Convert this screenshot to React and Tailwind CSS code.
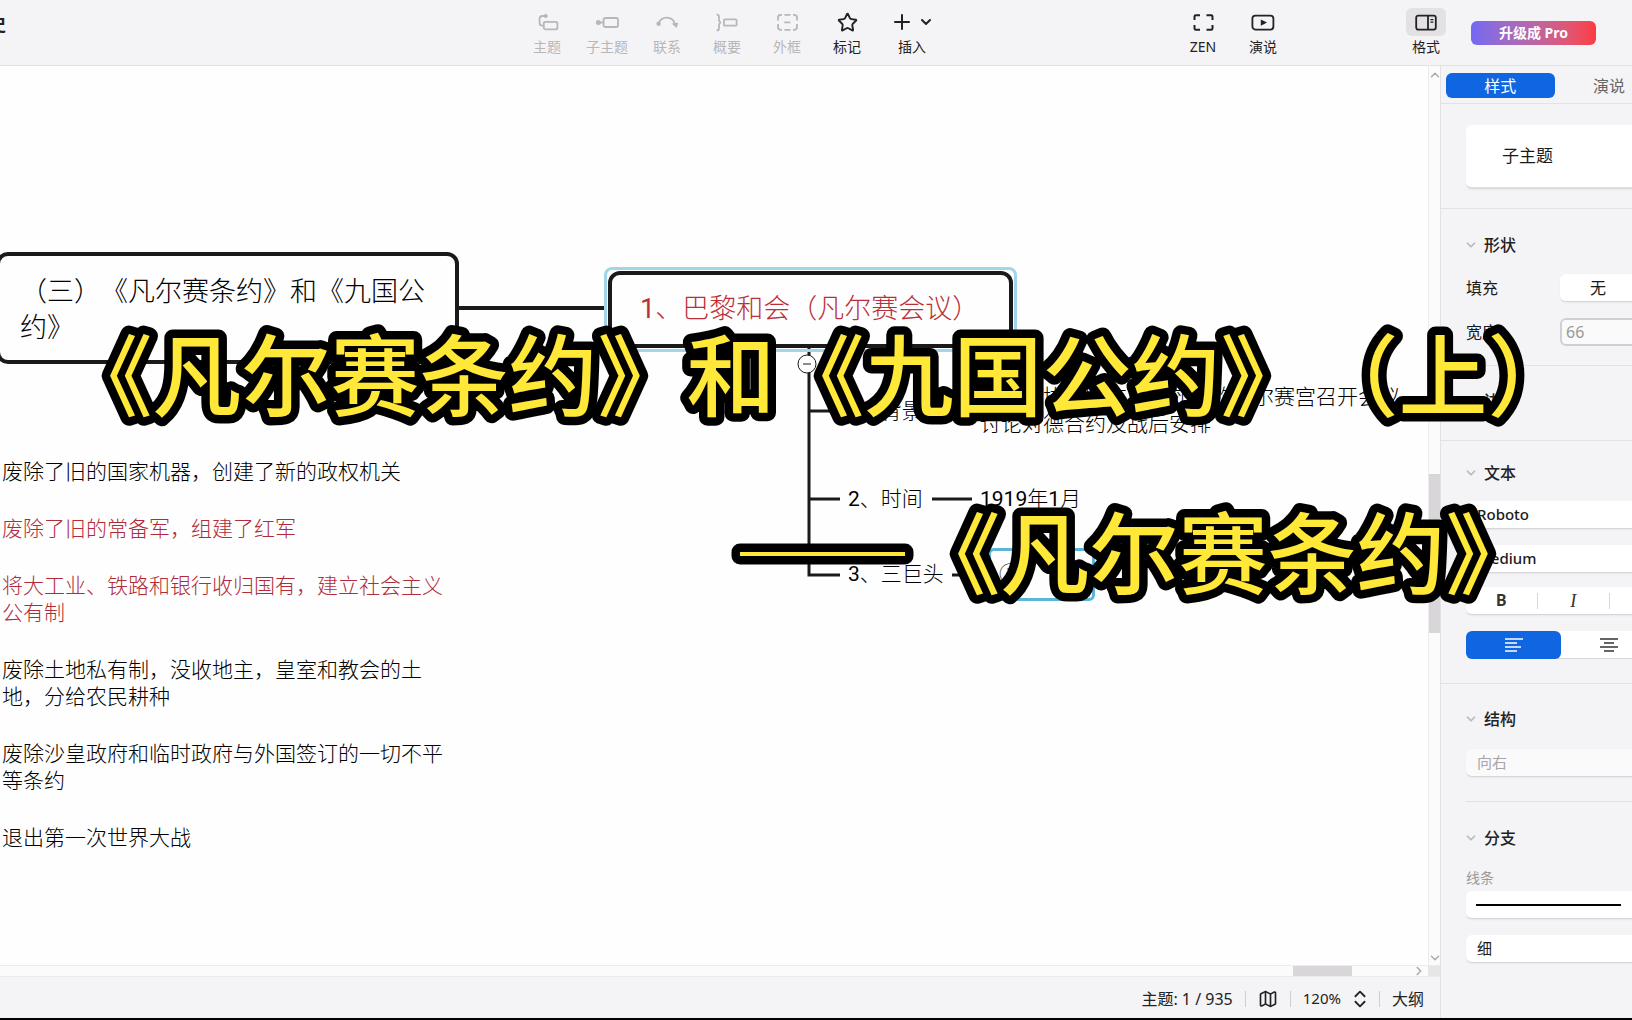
import { useState } from 'react'

import { ChevronDown, ChevronRight, ChevronUp, ChevronsUpDown, Map, Plus, Star } from 'lucide-react'

const iconProps = {
  width: 24,
  height: 20,
  viewBox: '0 0 24 20',
  fill: 'none',
  stroke: 'currentColor',
  strokeWidth: 1.8,
  strokeLinejoin: 'round',
  'aria-hidden': true,
}

const TopicIcon = () => (
  <svg {...iconProps}>
    <circle cx="10.7" cy="4" r="2" fill="currentColor" stroke="none" />
    <path d="M10.5 4H7.2Q4.6 4 4.6 6.6V11Q4.6 13.6 7.2 13.6H8.5" />
    <rect x="8.8" y="9.8" width="13.6" height="7.6" rx="1.6" />
  </svg>
)

const SubtopicIcon = () => (
  <svg {...iconProps}>
    <circle cx="3.4" cy="10.5" r="2.5" fill="currentColor" stroke="none" />
    <path d="M4 10.5H8.5" />
    <rect x="8.6" y="6" width="14.4" height="9" rx="1.8" />
  </svg>
)

const RelationIcon = () => (
  <svg {...iconProps}>
    <circle cx="3.6" cy="11.8" r="2.2" fill="currentColor" stroke="none" />
    <path d="M3.6 11.8C6 3.5 17.5 3.5 20 12" />
    <path d="M16.6 11.6L23.4 10.8L21.6 16Z" fill="currentColor" stroke="none" />
  </svg>
)

const SummaryIcon = () => (
  <svg {...iconProps}>
    <path d="M1.6 2.6Q4 2.6 4 4.6V8.8L5.4 10.5L4 12.2V16.4Q4 18.4 1.6 18.4" />
    <rect x="9" y="7.3" width="12.6" height="6.4" rx="1" />
  </svg>
)

const BoundaryIcon = () => (
  <svg {...iconProps}>
    <path d="M3 8.6V5.6Q3 2.8 5.8 2.8H7M9.5 2.8H15.5M18 2.8H19.2Q22 2.8 22 5.6V8.6M22 12V15Q22 17.8 19.2 17.8H18M15.5 17.8H9.5M7 17.8H5.8Q3 17.8 3 15V12M9.3 10.3H15.3" />
  </svg>
)

const ZenIcon = () => (
  <svg {...iconProps} strokeWidth={2}>
    <path d="M3.5 8V4.6Q3.5 3.2 4.9 3.2H9M15.5 3.2H20.1Q21.5 3.2 21.5 4.6V8M21.5 13V16.4Q21.5 17.8 20.1 17.8H15.5M9 17.8H4.9Q3.5 17.8 3.5 16.4V13" />
  </svg>
)

const PlayIcon = () => (
  <svg {...iconProps}>
    <rect x="1.4" y="3.6" width="21" height="14" rx="3" />
    <path d="M9.8 7.4L16 10.6L9.8 13.8Z" fill="currentColor" stroke="none" />
  </svg>
)

const FormatIcon = () => (
  <svg {...iconProps}>
    <rect x="2.2" y="3.6" width="19.6" height="14" rx="2" />
    <path d="M14 3.6V17.6" />
    <path d="M16.4 7.6H19.4M16.4 10.2H19.4" strokeWidth="1.3" />
  </svg>
)

const tools = [
  { label: '主题', icon: <TopicIcon />, disabled: true },
  { label: '子主题', icon: <SubtopicIcon />, disabled: true },
  { label: '联系', icon: <RelationIcon />, disabled: true },
  { label: '概要', icon: <SummaryIcon />, disabled: true },
  { label: '外框', icon: <BoundaryIcon />, disabled: true },
  { label: '标记', icon: <Star size={21} strokeWidth={2.2} /> },
]

function ToolButton({ label, icon, disabled, active }) {
  return (
    <button type="button" disabled={disabled} className="flex w-[60px] flex-col items-center text-[#222] disabled:text-[#b7b7ba]">
      <span className={active ? 'flex h-7 w-10 items-center justify-center rounded-md bg-[#e3e1e4]' : 'flex h-7 items-center justify-center'}>
        {icon}
      </span>
      <span className="mt-px text-sm leading-5">{label}</span>
    </button>
  )
}

function Header() {
  return (
    <header className="flex h-[66px] shrink-0 items-start border-b border-[#e2e2e5] bg-[#f4f4f7] pt-2">
      <h1 className="-ml-3 grow-[529] basis-0 text-lg leading-8 font-bold text-[#222]">史</h1>
      <div className="flex">
        {tools.map(tool => <ToolButton key={tool.label} {...tool} />)}
        <button type="button" className="flex w-[70px] flex-col items-center text-[#222]">
          <span className="flex h-7 items-center gap-1">
            <Plus size={24} strokeWidth={2} />
            <ChevronDown size={16} strokeWidth={3} />
          </span>
          <span className="mt-px text-sm leading-5">插入</span>
        </button>
      </div>
      <div className="grow-[226] basis-0" />
      <ToolButton label="ZEN" icon={<ZenIcon />} />
      <ToolButton label="演说" icon={<PlayIcon />} />
      <div className="grow-[103] basis-0" />
      <ToolButton label="格式" icon={<FormatIcon />} active />
      <button type="button" className="mt-[13px] mr-9 ml-[15px] h-6 w-[125px] rounded-md bg-linear-to-r from-[#7468f4] to-[#fc3a40] text-sm leading-6 font-bold text-white">
        升级成 Pro
      </button>
    </header>
  )
}

const outline = [
  { text: '废除了旧的国家机器，创建了新的政权机关' },
  { text: '废除了旧的常备军，组建了红军', red: true },
  { text: '将大工业、铁路和银行收归国有，建立社会主义公有制', red: true },
  { text: '废除土地私有制，没收地主，皇室和教会的土地，分给农民耕种' },
  { text: '废除沙皇政府和临时政府与外国签订的一切不平等条约' },
  { text: '退出第一次世界大战' },
]

// Free canvas, every node sits at its own place on the map
function MindMap() {
  return (
    <div className="relative min-w-0 flex-1 overflow-hidden bg-[#fefefe] font-['Roboto','Noto_Sans_CJK_SC',sans-serif] text-[21px] leading-[27px] font-light text-black">
      <svg className="absolute top-0 left-0" width="1200" height="600" fill="none" stroke="#1a1a1a" strokeWidth="3" aria-hidden="true">
        <path d="M459 242H607" strokeWidth="4" />
        <path d="M809 281V509H840M809 345H840M809 433H840M932 345H972M932 433H972M952 509H992" />
        <circle cx="807" cy="298" r="9" fill="#fefefe" strokeWidth="1" />
        <path d="M803 298H811" strokeWidth="1" />
      </svg>

      <div className="absolute top-[186px] left-[-4px] w-[463px] rounded-xl border-4 border-[#1a1a1a] px-5 py-4 font-['Noto_Sans_CJK_SC',sans-serif] text-[27px] leading-9">
        （三）《凡尔赛条约》和《九国公约》
      </div>

      <div className="absolute top-[201px] left-[604px] rounded-lg border-3 border-[#a3d5ea] p-px">
        <div className="flex h-[77px] w-[405px] items-center rounded-xl border-4 border-[#1a1a1a] px-7 text-[27px] whitespace-nowrap text-[#bb3038]">
          <span className="font-normal">1</span>、巴黎和会（凡尔赛会议）
        </div>
      </div>

      <p className="absolute top-[332px] left-[848px]"><span className="font-normal">1</span>、背景</p>
      <p className="absolute top-[318px] left-[980px] w-[441px]">胜利的协约国在巴黎郊外的凡尔赛宫召开会议，讨论对德合约及战后安排</p>
      <p className="absolute top-[420px] left-[848px]"><span className="font-normal">2</span>、时间</p>
      <p className="absolute top-[420px] left-[980px]"><span className="font-normal">1919</span>年<span className="font-normal">1</span>月</p>
      <p className="absolute top-[495px] left-[848px]"><span className="font-normal">3</span>、三巨头</p>
      <div className="absolute top-[482px] left-[988px] flex h-[53px] w-[107px] items-center rounded-md border-3 border-[#5bb5d6] bg-[#fefefe] px-2">①</div>

      <ul className="absolute top-[393px] left-0.5 flex w-[442px] flex-col gap-[30px]">
        {outline.map(item => (
          <li key={item.text} className={item.red ? 'text-[#b02c38]' : ''}>{item.text}</li>
        ))}
      </ul>
    </div>
  )
}

function StatusBar() {
  return (
    <footer className="flex h-[41px] shrink-0 items-center justify-end bg-[#f4f4f7] pt-0.5 pr-4 text-[15px] text-[#222]">
      <span className="text-base">主题: 1 / 935</span>
      <span className="mx-3 h-4 w-px bg-[#cfcfd3]" />
      <button type="button" aria-label="导航"><Map size={20} strokeWidth={2} /></button>
      <span className="mx-3 h-4 w-px bg-[#cfcfd3]" />
      <span>120%</span>
      <button type="button" aria-label="缩放" className="ml-2"><ChevronsUpDown size={22} strokeWidth={2} /></button>
      <span className="mr-3 ml-2 h-4 w-px bg-[#cfcfd3]" />
      <button type="button" className="text-base">大纲</button>
    </footer>
  )
}

function SectionTitle({ children }) {
  return (
    <h2 className="flex h-6 items-center gap-1.5 text-base font-medium text-[#222]">
      <ChevronDown size={14} strokeWidth={3} className="-ml-0.5 text-[#b9b9bd]" />
      {children}
    </h2>
  )
}

function AlignLines({ center }) {
  return (
    <svg width="18" height="14" viewBox="0 0 18 14" fill="none" stroke="currentColor" strokeWidth="1.3" aria-hidden="true">
      {center
        ? <path d="M0 1H18M4 5H14M0 9H18M4 13H14" />
        : <path d="M0 1H18M0 5H12M0 9H16M0 13H12" />}
    </svg>
  )
}

const fieldClass = 'block h-7 w-full appearance-none rounded-md border-b border-[#d6d6da] bg-white px-[11px] text-[15px] shadow-xs disabled:bg-[#fafafb] disabled:text-[#a5a5a9] disabled:opacity-100'

function Sidebar() {
  const [tab, setTab] = useState('样式')

  return (
    <aside className="w-[192px] shrink-0 overflow-hidden border-l border-[#e2e2e5] bg-[#f4f4f7] text-[#1a1a1a]">
      <div className="w-[336px]">
        <div className="flex h-[38px] items-center border-b border-[#e2e2e5] px-[5px] pt-0.5">
          {['样式', '演说', '画布'].map(name => (
            <button
              key={name}
              type="button"
              onClick={() => setTab(name)}
              className={tab === name ? 'h-[25px] w-[109px] rounded-md bg-[#1065e0] text-base leading-6 text-white' : 'h-[25px] w-[109px] text-base leading-6 text-[#666]'}
            >
              {name}
            </button>
          ))}
        </div>

        <div className="border-b border-[#e2e2e5] px-[25px] pt-[21px] pb-[19px]">
          <div className="flex h-16 items-center rounded-md border-b-2 border-[#dcdce0] bg-white px-9 text-[17px] shadow-xs">子主题</div>
        </div>

        <section className="border-b border-[#e2e2e5] px-[25px] pt-6 pb-[19px]">
          <SectionTitle>形状</SectionTitle>
          <div className="mt-[17px] flex items-center">
            <label htmlFor="fill" className="w-[94px] text-base">填充</label>
            <select id="fill" className="h-7 w-[191px] appearance-none rounded-md border-b border-[#d6d6da] bg-white px-[30px] text-base shadow-xs">
              <option>无</option>
            </select>
          </div>
          <div className="mt-4 flex items-center">
            <label htmlFor="width" className="w-[94px] text-base">宽度</label>
            <input id="width" defaultValue="66" className="h-7 w-[191px] rounded-md border-2 border-[#d0d0d4] bg-[#fafafb] px-1 text-base text-[#999]" />
          </div>
        </section>

        <section className="border-b border-[#e2e2e5] px-[25px] pt-[23px] pb-[27px]">
          <SectionTitle>边框</SectionTitle>
        </section>

        <section className="border-b border-[#e2e2e5] px-[25px] pt-5 pb-6">
          <SectionTitle>文本</SectionTitle>
          <select aria-label="字体" className={`${fieldClass} mt-4 font-medium`}>
            <option>Roboto</option>
          </select>
          <select aria-label="字重" className={`${fieldClass} mt-4 font-medium`}>
            <option>Medium</option>
          </select>
          <div className="mt-[14px] flex h-7 items-center divide-x divide-[#d6d6da] rounded-md border-b border-[#d6d6da] bg-white font-['Roboto',sans-serif] text-base leading-4 text-[#333] shadow-xs">
            <button type="button" className="flex-1 font-bold">B</button>
            <button type="button" className="flex-1 font-['Liberation_Serif',serif] text-lg leading-4 italic">I</button>
            <button type="button" className="flex-1 line-through">S</button>
            <button type="button" className="flex-1">Aa</button>
          </div>
          <div className="mt-4 flex h-7 rounded-md border-b border-[#d6d6da] bg-white">
            <button type="button" aria-label="左对齐" className="flex h-7 flex-1 items-center justify-center rounded-md bg-[#1065e0] text-white">
              <AlignLines />
            </button>
            <button type="button" aria-label="居中" className="flex h-7 flex-1 items-center justify-center text-[#333]">
              <AlignLines center />
            </button>
            <span className="flex-1" />
          </div>
        </section>

        <section className="px-[25px] pt-[23px]">
          <SectionTitle>结构</SectionTitle>
          <select aria-label="结构" disabled className={`${fieldClass} mt-[18px]`}>
            <option>向右</option>
          </select>
        </section>

        <section className="mx-[25px] mt-6 border-t border-[#e2e2e5] pt-6">
          <SectionTitle>分支</SectionTitle>
          <p className="mt-4 text-sm leading-6 text-[#999]">线条</p>
          <button type="button" aria-label="线条样式" className="mt-px flex h-7 w-full items-center rounded-md border-b border-[#d6d6da] bg-white px-[10px] shadow-xs">
            <span className="h-0.5 w-[145px] bg-black" />
          </button>
          <select aria-label="线条粗细" className={`${fieldClass} mt-4`}>
            <option>细</option>
          </select>
        </section>
      </div>
    </aside>
  )
}

// Big outlined title over the whole window, the svg gives the letters a round black edge
function Caption() {
  return (
    <svg
      className="pointer-events-none absolute inset-0 h-full w-full font-['Noto_Sans_CJK_SC',sans-serif] text-[89px] font-medium [paint-order:stroke]"
      fill="#ffe838"
      stroke="#000"
      strokeWidth="17"
      strokeLinejoin="round"
      strokeLinecap="round"
      textAnchor="middle"
    >
      <text x="50%" y="409" dx="4">《凡尔赛条约》和《九国公约》（上）</text>
      <text x="50%" y="587" dx="318">——《凡尔赛条约》</text>
    </svg>
  )
}

export default function App() {
  return (
    <div lang="zh-CN" className="relative flex h-screen flex-col overflow-hidden border-b-2 border-black font-['Noto_Sans','Noto_Sans_CJK_SC',sans-serif] [text-spacing-trim:space-all]">
      <Header />
      <div className="flex min-h-0 flex-1">
        <main className="flex min-w-0 flex-1 flex-col">
          <div className="flex min-h-0 flex-1">
            <MindMap />
            <div className="flex w-3 shrink-0 flex-col items-center border-l border-[#ececee] bg-[#fbfbfc] text-[#aaa]">
              <ChevronUp size={14} strokeWidth={2.5} className="mt-0.5 shrink-0" />
              <div className="grow-[391] basis-0" />
              <div className="w-full grow-[159] basis-0 bg-[#d8d6d9]" />
              <div className="grow-[317] basis-0" />
              <ChevronDown size={14} strokeWidth={2.5} className="shrink-0" />
            </div>
          </div>
          <div className="flex h-3 shrink-0 items-stretch border-y border-[#ececee] bg-[#fbfbfc] text-[#aaa]">
            <div className="grow-[1293] basis-0" />
            <div className="grow-[59] basis-0 bg-[#d8d6d9]" />
            <div className="grow-[60] basis-0" />
            <ChevronRight size={14} strokeWidth={2.5} className="mr-0.5 self-center" />
            <div className="w-3 bg-[#e6e5e7]" />
          </div>
          <StatusBar />
        </main>
        <Sidebar />
      </div>
      <Caption />
    </div>
  )
}
